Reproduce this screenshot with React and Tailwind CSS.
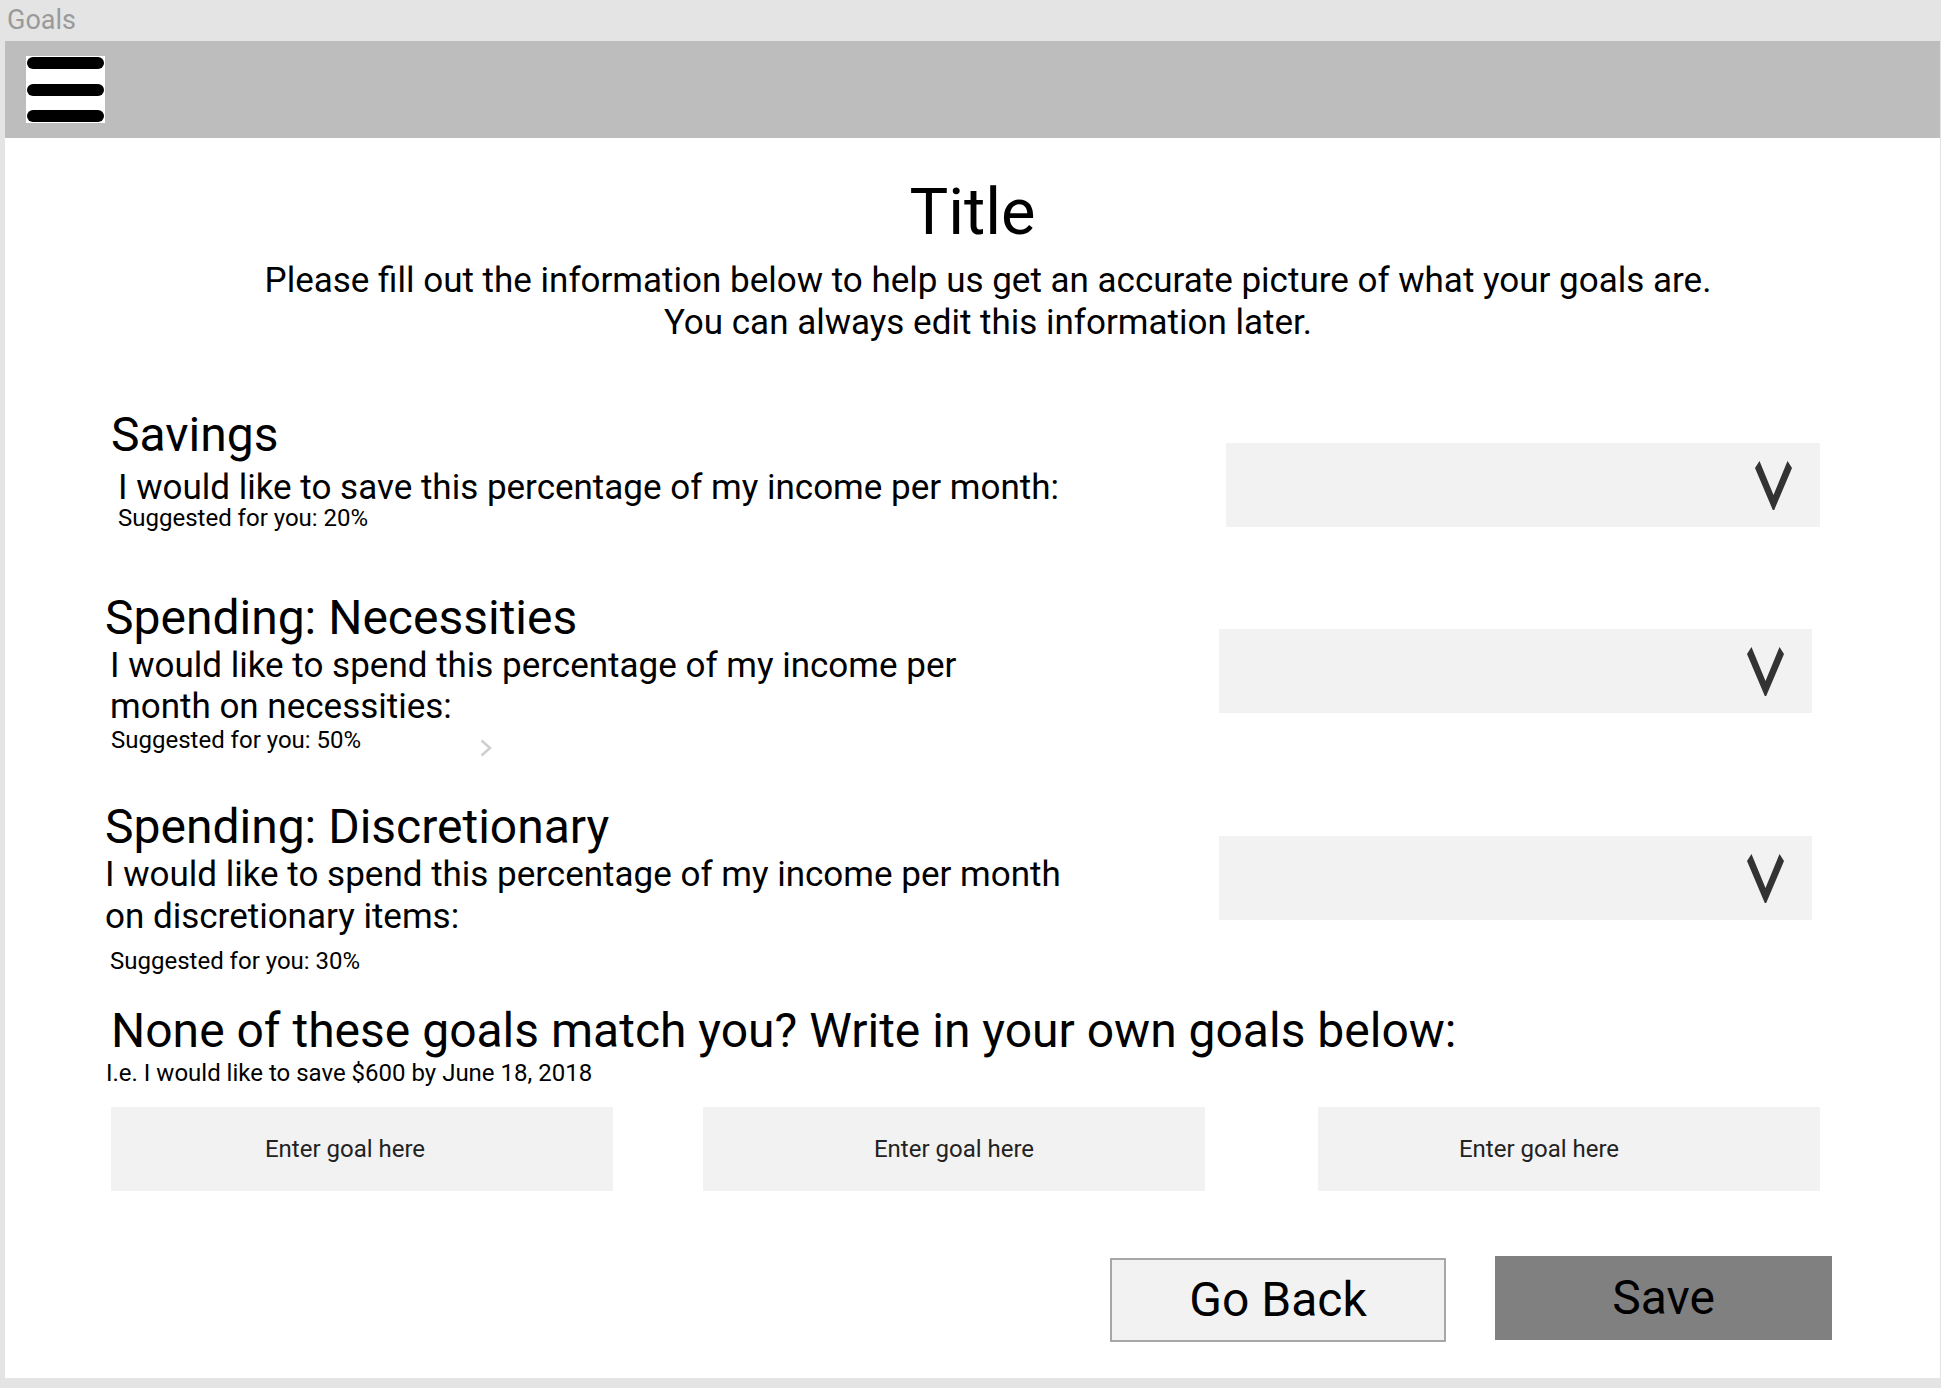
import React from 'react'

function Chevron() {
  return (
    <svg width="37" height="49" viewBox="0 0 37 49" fill="#333">
      <polygon points="0,7 4.5,0 18.5,34 32.5,0 37,7 19.2,49 17.8,49" />
    </svg>
  )
}

function Dropdown({ className = '' }) {
  return (
    <div className={`h-[84px] bg-[#f2f2f2] flex items-center justify-end pr-[28px] ${className}`}>
      <Chevron />
    </div>
  )
}

function GoalBox({ className = '' }) {
  return (
    <div className={`h-[84px] w-[502px] bg-[#f2f2f2] flex items-center justify-center text-[24px] text-[#222] ${className}`}>
      Enter goal here
    </div>
  )
}

export default function App() {
  return (
    <div className="w-[1941px] h-[1388px] bg-[#e4e4e4] flex flex-col font-[Roboto,sans-serif] text-black overflow-hidden">
      {/* window label */}
      <div className="h-[41px] pl-[7px] text-[27px] leading-[41px] text-[#9a9a9a]">Goals</div>

      <div className="ml-[5px] w-[1935px] h-[1337px] bg-white flex flex-col">
        {/* top bar */}
        <div className="h-[97px] bg-[#bdbdbd] pl-[21px] pt-[15px]">
          <div className="w-[79px] h-[67px] bg-white flex flex-col justify-between py-[1px] px-[1px]">
            <div className="h-[12px] rounded-full bg-black" />
            <div className="h-[12px] rounded-full bg-black" />
            <div className="h-[12px] rounded-full bg-black" />
          </div>
        </div>

        <h1 className="mt-[36px] text-center text-[65px] leading-[76px]">Title</h1>
        <p className="mt-[10px] pl-[31px] text-center text-[35px] leading-[42px]">
          Please fill out the information below to help us get an accurate picture of what your goals are.
          <br />
          You can always edit this information later.
        </p>

        {/* Savings */}
        <div className="mt-[65px] flex items-start pl-[106px] pr-[120px]">
          <div className="flex-1">
            <h2 className="text-[48px] leading-[52px]">Savings</h2>
            <p className="mt-[9px] ml-[7px] text-[35px] leading-[36px]">I would like to save this percentage of my income per month:</p>
            <p className="ml-[7px] text-[24px] leading-[24px]">Suggested for you: 20%</p>
          </div>
          <Dropdown className="w-[594px] mt-[34px]" />
        </div>

        {/* Necessities */}
        <div className="mt-[62px] flex items-start pl-[100px] pr-[128px]">
          <div className="flex-1">
            <h2 className="text-[48px] leading-[52px]">Spending: Necessities</h2>
            <p className="mt-[1px] ml-[5px] text-[35px] leading-[41px]">
              I would like to spend this percentage of my income per
              <br />
              month on necessities:
            </p>
            <div className="ml-[6px] flex items-start">
              <p className="text-[24px] leading-[26px]">Suggested for you: 50%</p>
              <svg className="ml-[119px] mt-[12px]" width="12" height="18" viewBox="0 0 12 18" fill="none">
                <polyline points="1.5,1.5 10,9 1.5,16.5" stroke="#cfcfcf" strokeWidth="2.5" />
              </svg>
            </div>
          </div>
          <Dropdown className="w-[593px] mt-[37px]" />
        </div>

        {/* Discretionary */}
        <div className="mt-[44px] flex items-start pl-[100px] pr-[128px]">
          <div className="flex-1">
            <h2 className="text-[48px] leading-[52px]">Spending: Discretionary</h2>
            <p className="mt-[1px] text-[35px] leading-[42px]">
              I would like to spend this percentage of my income per month
              <br />
              on discretionary items:
            </p>
            <p className="mt-[10px] ml-[5px] text-[24px] leading-[26px]">Suggested for you: 30%</p>
          </div>
          <Dropdown className="w-[593px] mt-[35px]" />
        </div>

        {/* Custom goals */}
        <div className="mt-[31px] pl-[106px]">
          <h2 className="text-[48px] leading-[52px]">None of these goals match you? Write in your own goals below:</h2>
          <p className="mt-[3px] ml-[-5px] text-[24px] leading-[26px]">I.e. I would like to save $600 by June 18, 2018</p>
          <div className="mt-[21px] flex">
            <GoalBox className="pr-[34px]" />
            <GoalBox className="ml-[90px]" />
            <GoalBox className="ml-[113px] pr-[60px]" />
          </div>
        </div>

        {/* Actions */}
        <div className="mt-[65px] flex items-start justify-end pr-[108px] gap-[49px]">
          <button className="mt-[2px] w-[336px] h-[84px] bg-[#f2f2f2] border-2 border-[#a6a6a6] text-[48px] leading-none">Go Back</button>
          <button className="w-[337px] h-[84px] bg-[#808080] text-[48px] leading-none">Save</button>
        </div>
      </div>
    </div>
  )
}
